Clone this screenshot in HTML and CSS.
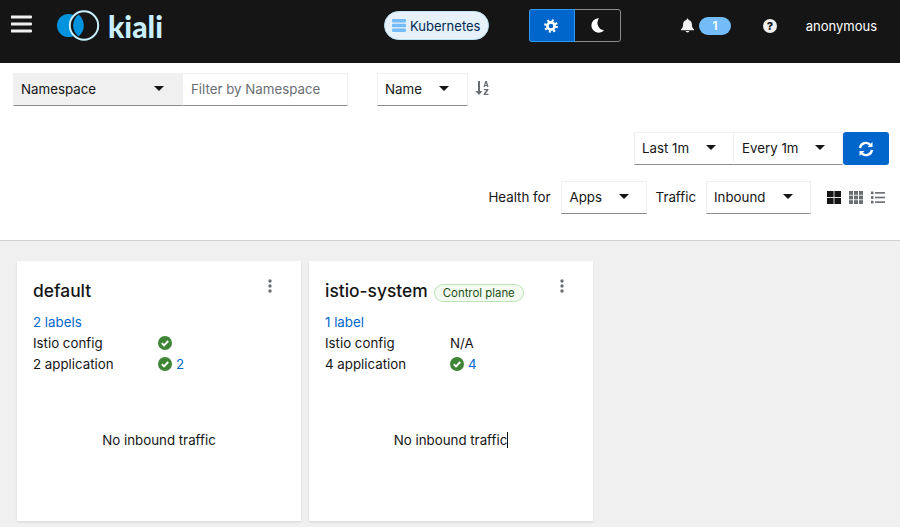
FILE: index.html
```html
<!DOCTYPE html>
<html lang="en">
<head>
<meta charset="utf-8">
<title>Kiali</title>
<link rel="stylesheet" href="styles.css">
</head>
<body>
<header class="masthead">
  <svg class="burger" width="24" height="20" viewBox="0 0 24 20"><path d="M1 1.500h20a1 1 0 0 1 1 1v1a1 1 0 0 1-1 1H1zM1 8.500h20a1 1 0 0 1 1 1v1a1 1 0 0 1-1 1H1zM1 15.500h20a1 1 0 0 1 1 1v1a1 1 0 0 1-1 1H1z" fill="#f0f0f0"/></svg>
  <div class="brand">
    <svg width="46" height="32" viewBox="0 0 46 32"><circle cx="11.500" cy="15.500" r="11.500" fill="#0093dd"/><circle cx="27" cy="15.500" r="14" fill="#151515"/><path d="M21.500 4.500a14 14 0 0 1 0 22a14 14 0 0 1 0-22z" fill="#0093dd"/><circle cx="27" cy="15.500" r="14.200" fill="none" stroke="#c8effb" stroke-width="2"/></svg>
    <span class="brand-name">kiali</span>
  </div>
  <div class="cluster-chip">
    <svg width="14" height="13" viewBox="0 0 14 13" fill="#73bcf7"><rect y="0" width="14" height="3.600" rx="1"/><rect y="4.700" width="14" height="3.600" rx=".5"/><rect y="9.400" width="14" height="3.600" rx="1"/></svg>
    <span>Kubernetes</span>
  </div>
  <div class="theme-toggle">
    <div class="theme-btn theme-on"><svg width="14" height="14" viewBox="0 0 14 14"><circle cx="7" cy="7" r="3.600" fill="none" stroke="#fff" stroke-width="2.600"/><circle cx="7" cy="7" r="5.600" fill="none" stroke="#fff" stroke-width="2.600" stroke-dasharray="2 2.400"/></svg></div>
    <div class="theme-btn"><svg width="13" height="15" viewBox="0 0 13 15"><path d="M8 .3a7.200 7.200 0 1 0 5 12a7.500 7.500 0 0 1-5-12z" fill="#fff"/></svg></div>
  </div>
  <div class="notify">
    <svg width="13" height="15" viewBox="0 0 14 15"><path d="M7 0a1 1 0 0 1 1 1v.6c2.500.4 3.800 2.400 3.800 5 0 2.500.8 3.600 2.200 5v1H0v-1c1.400-1.400 2.200-2.500 2.200-5 0-2.600 1.300-4.600 3.800-5V1a1 1 0 0 1 1-1zM5 13.500h4a2 1.500 0 0 1-4 0z" fill="#f0f0f0"/></svg>
    <span class="notify-badge">1</span>
  </div>
  <div class="help">?</div>
  <div class="user">anonymous</div>
</header>

<section class="toolbar">
  <div class="tool-row">
    <div class="select select-ns">Namespace<i class="caret"></i></div>
    <div class="filter-input">Filter by Namespace</div>
    <div class="select select-name">Name<i class="caret"></i></div>
    <svg class="sort-icon" width="14" height="14" viewBox="0 0 14 14" fill="#6a6e73"><path d="M3 0h2v10h2.500L4 14 .5 10H3z"/><path d="M8.500 6L10.300 0h1.500l1.800 6h-1.400l-.3-1h-1.800l-.3 1zM10.400 3.900h1.200l-.6-2z"/><path d="M8.800 8h4.600v1.200L10.600 12.800h2.900V14H8.600v-1.200l2.800-3.600H8.800z"/></svg>
  </div>
  <div class="tool-row tool-row-right time-row">
    <div class="select select-time">Last 1m<i class="caret"></i></div>
    <div class="select select-every">Every 1m<i class="caret"></i></div>
    <div class="refresh"><svg width="16" height="16" viewBox="0 0 16 16" fill="none" stroke="#fff" stroke-width="2.400"><path d="M2 7a6 6 0 0 1 10.500-3"/><path d="M14 9a6 6 0 0 1-10.500 3"/><path d="M14.500 1v5h-5z" fill="#fff" stroke="none"/><path d="M1.500 15v-5h5z" fill="#fff" stroke="none"/></svg></div>
  </div>
  <div class="tool-row tool-row-right health-row">
    <span class="tool-label">Health for</span>
    <div class="select select-apps">Apps<i class="caret"></i></div>
    <span class="tool-label label-traffic">Traffic</span>
    <div class="select select-inbound">Inbound<i class="caret"></i></div>
    <div class="views">
      <svg width="14" height="13" viewBox="0 0 14 12" preserveAspectRatio="none" fill="#151515"><rect width="6.600" height="5.600"/><rect x="7.400" width="6.600" height="5.600"/><rect y="6.400" width="6.600" height="5.600"/><rect x="7.400" y="6.400" width="6.600" height="5.600"/></svg>
      <svg width="14" height="13" viewBox="0 0 14 12" preserveAspectRatio="none" fill="#6a6e73"><rect width="4" height="3.500"/><rect x="5" width="4" height="3.500"/><rect x="10" width="4" height="3.500"/><rect y="4.250" width="4" height="3.500"/><rect x="5" y="4.250" width="4" height="3.500"/><rect x="10" y="4.250" width="4" height="3.500"/><rect y="8.500" width="4" height="3.500"/><rect x="5" y="8.500" width="4" height="3.500"/><rect x="10" y="8.500" width="4" height="3.500"/></svg>
      <svg width="14" height="13" viewBox="0 0 14 12" preserveAspectRatio="none" fill="#6a6e73"><rect y="0.500" width="2.500" height="2.500"/><rect y="4.750" width="2.500" height="2.500"/><rect y="9" width="2.500" height="2.500"/><rect x="4" y="1" width="10" height="1.500"/><rect x="4" y="5.250" width="10" height="1.500"/><rect x="4" y="9.500" width="10" height="1.500"/></svg>
    </div>
  </div>
</section>

<main class="overview">
  <article class="card">
    <div class="card-head"><h2>default</h2><svg class="kebab" width="4" height="14" viewBox="0 0 4 14" fill="#6a6e73"><circle cx="2" cy="2" r="1.700"/><circle cx="2" cy="7" r="1.700"/><circle cx="2" cy="12" r="1.700"/></svg></div>
    <div class="card-line link">2 labels</div>
    <div class="card-line"><span class="line-key">Istio config</span><svg class="ok" width="14" height="14" viewBox="0 0 14 14"><circle cx="7" cy="7" r="7" fill="#3e8635"/><path d="M3.800 7.200l2.200 2.200 4.200-4.400" fill="none" stroke="#fff" stroke-width="1.900"/></svg></div>
    <div class="card-line"><span class="line-key">2 application</span><svg class="ok" width="14" height="14" viewBox="0 0 14 14"><circle cx="7" cy="7" r="7" fill="#3e8635"/><path d="M3.800 7.200l2.200 2.200 4.200-4.400" fill="none" stroke="#fff" stroke-width="1.900"/></svg><span class="link">2</span></div>
    <div class="traffic">No inbound traffic</div>
  </article>
  <article class="card">
    <div class="card-head"><h2>istio-system</h2><span class="cp-chip">Control plane</span><svg class="kebab" width="4" height="14" viewBox="0 0 4 14" fill="#6a6e73"><circle cx="2" cy="2" r="1.700"/><circle cx="2" cy="7" r="1.700"/><circle cx="2" cy="12" r="1.700"/></svg></div>
    <div class="card-line link">1 label</div>
    <div class="card-line"><span class="line-key">Istio config</span><span>N/A</span></div>
    <div class="card-line"><span class="line-key">4 application</span><svg class="ok" width="14" height="14" viewBox="0 0 14 14"><circle cx="7" cy="7" r="7" fill="#3e8635"/><path d="M3.800 7.200l2.200 2.200 4.200-4.400" fill="none" stroke="#fff" stroke-width="1.900"/></svg><span class="link">4</span></div>
    <div class="traffic">No inbound traffi<span class="caret-text">c</span></div>
  </article>
</main>
</body>
</html>
```
FILE: styles.css
```css
* { box-sizing: border-box; }
html, body { margin: 0; height: 100%; overflow: hidden; }
body {
  font-family: "Inter", "Noto Sans", sans-serif;
  font-size: 13.3px;
  color: #151515;
  background: #f0f0f0;
}
.masthead {
  display: flex;
  align-items: center;
  height: 63px;
  padding: 0 23px 12px 10px;
  background: #151515;
  color: #fff;
}
.burger { flex: none; margin-top: -4px; }
.brand { display: flex; align-items: center; gap: 5px; margin-left: 23px; width: 327px; }
.brand-name {
  font-family: "Lato", sans-serif;
  font-weight: 900;
  font-size: 30px;
  line-height: 32px;
  color: #c8effb;
}
.cluster-chip {
  display: flex;
  align-items: center;
  gap: 4px;
  width: 105px;
  height: 29px;
  padding-left: 7px;
  border: 1px solid #bee1f4;
  border-radius: 15px;
  background: #e7f1fa;
  color: #002952;
  font-size: 13px;
}
.theme-toggle {
  display: flex;
  margin-left: 40px;
  width: 92px;
  height: 33px;
  border: 1px solid #8a8d90;
  border-radius: 3px;
}
.theme-btn { display: flex; align-items: center; justify-content: center; flex: 1; }
.theme-on {
  flex: none;
  width: 46px;
  padding-right: 2px;
  margin: -1px 0 -1px -1px;
  background: #06c;
  border: 1px solid #2b9af3;
  border-radius: 3px 0 0 3px;
}
.notify { display: flex; align-items: center; gap: 5px; margin-left: 60px; }
.notify-badge {
  width: 32px;
  height: 18px;
  border-radius: 9px;
  background: #73bcf7;
  color: #fff;
  font-size: 12px;
  font-weight: 600;
  line-height: 18px;
  text-align: center;
}
.help {
  width: 14px;
  height: 14px;
  margin-left: 32px;
  border-radius: 50%;
  background: #f0f0f0;
  color: #151515;
  font-size: 11px;
  font-weight: 800;
  line-height: 14px;
  text-align: center;
}
.user { margin-left: auto; font-size: 13px; }

.toolbar {
  height: 178px;
  padding: 10px 11px 0 13px;
  background: #fff;
  border-bottom: 1px solid #d2d2d2;
}
.tool-row { display: flex; align-items: center; height: 33px; }
.tool-row-right { justify-content: flex-end; }
.time-row { margin-top: 26px; }
.health-row { margin-top: 16px; }
.select {
  display: flex;
  align-items: center;
  justify-content: space-between;
  height: 33px;
  padding: 0 11px 2px 7px;
  border: 1px solid #f0f0f0;
  border-bottom-color: #8a8d90;
  flex: none;
}
.caret {
  width: 0;
  height: 0;
  border: 5px solid transparent;
  border-top: 5px solid #151515;
  border-bottom: 0;
}
.select-ns { width: 170px; background: #f0f0f0; padding-right: 18px; }
.filter-input {
  display: flex;
  align-items: center;
  width: 165px;
  height: 33px;
  padding: 0 0 2px 8px;
  border: 1px solid #f0f0f0;
  border-bottom-color: #8a8d90;
  border-left: 0;
  color: #6a6e73;
}
.select-name { width: 91px; margin-left: 29px; padding-right: 18px; }
.sort-icon { margin: 0 0 3px 7px; }
.select-time { width: 100px; padding-right: 17px; }
.select-every { width: 110px; margin-left: -1px; padding-left: 8px; padding-right: 17px; }
.refresh {
  display: flex;
  align-items: center;
  justify-content: center;
  width: 46px;
  height: 33px;
  background: #06c;
  border-radius: 3px;
}
.tool-label { flex: none; padding-bottom: 2px; }
.select-apps { width: 86px; margin-left: 10px; padding-left: 8px; padding-right: 17px; }
.label-traffic { margin-left: 9px; }
.select-inbound { width: 105px; margin-left: 10px; padding-right: 17px; }
.views { display: flex; gap: 8px; margin-left: 16px; margin-right: 4px; }

.overview { display: flex; gap: 8px; padding: 20px 17px 0; }
.card {
  display: flex;
  flex-direction: column;
  width: 284px;
  height: 260px;
  padding: 18px 16px 0;
  background: #fff;
  box-shadow: 0 1px 2px rgba(3, 3, 3, .12);
}
.card-head { position: relative; display: flex; align-items: center; gap: 6px; height: 24px; margin-bottom: 8px; }
.card-head h2 { margin: 0; font-size: 17.400px; font-weight: 500; line-height: 24px; }
.kebab { position: absolute; right: 13px; top: 0; }
.cp-chip {
  height: 18px;
  margin-top: 3px;
  padding: 0 8px;
  border: 1px solid #bde5b8;
  border-radius: 9px;
  background: #f3faf2;
  color: #1e4f18;
  font-size: 11.400px;
  line-height: 16px;
}
.card-line { display: flex; align-items: center; height: 21px; }
.line-key { width: 125px; }
.link { color: #06c; }
.ok { margin-right: 4px; }
.traffic { margin-top: 56px; text-align: center; line-height: 21px; }
.caret-text { display: inline-block; height: 16px; line-height: 16px; border-right: 1px solid #151515; }
```
